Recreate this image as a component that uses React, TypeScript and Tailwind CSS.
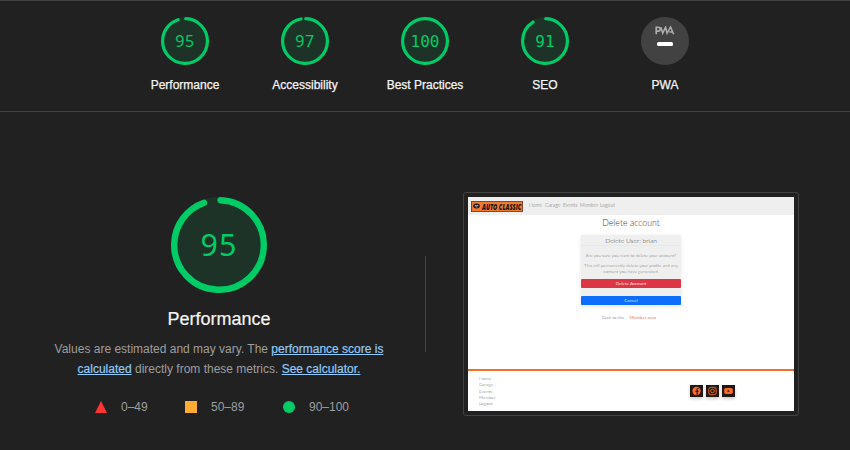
const sans = "font-['Liberation_Sans',Arial,sans-serif]";

function Arc({ score, className }: { score: number; className: string }) {
  const c = 2 * Math.PI * 56;
  const length = score === 100 ? c : (score / 100) * c - 4;
  return (
    <svg viewBox="0 0 120 120" className={`${className} col-start-1 row-start-1`}>
      <circle cx="60" cy="60" r="56" fill="#00cc66" stroke="#00cc66" strokeWidth="8" opacity="0.1" />
      <circle
        cx="60"
        cy="60"
        r="56"
        fill="none"
        stroke="#00cc66"
        strokeWidth="8"
        strokeLinecap="round"
        strokeDasharray={`${length} ${c}`}
        transform="rotate(-87.95 60 60)"
      />
    </svg>
  );
}

const categories = [
  { label: "Performance", score: 95, font: "font-['Noto_Sans',sans-serif] text-[16px] tracking-[0.5px]" },
  { label: "Accessibility", score: 97, font: "font-['Noto_Sans',sans-serif] text-[16px] tracking-[0.5px]" },
  { label: "Best Practices", score: 100, font: "pt-[2px] font-['DejaVu_Sans_Mono',monospace] text-[16px]" },
  { label: "SEO", score: 91, font: "pt-[2px] font-['DejaVu_Sans_Mono',monospace] text-[16px]" },
];

function Gauge({ label, score, font }: { label: string; score: number; font: string }) {
  return (
    <div className="flex w-[120px] flex-col items-center">
      <div className="grid place-items-center">
        <Arc score={score} className="size-12" />
        <span className={`col-start-1 row-start-1 leading-none text-[#00cc66] ${font}`}>{score}</span>
      </div>
      <span className="mt-[10px] text-xs leading-5 text-[#f5f5f5] [-webkit-text-stroke:0.25px_#f5f5f5]">{label}</span>
    </div>
  );
}

function Pwa() {
  return (
    <div className="flex w-[120px] flex-col items-center">
      <div className="flex size-12 flex-col items-center rounded-full bg-[#424242] pt-[9px]">
        <svg viewBox="0 0 20 9" className="h-[9px] w-5" fill="none" stroke="#b0b0b0">
          <path d="M1.2 8.2V1.2h2a1.8 1.8 0 0 1 0 3.9H1.2" strokeWidth="1.6" />
          <path d="M6 1.2l1.7 6 2.9-6 1.5 6L15.6 1l3 7.2M14.4 6h3" strokeWidth="1.5" />
        </svg>
        <div className="mt-[7px] h-[4px] w-4 rounded-[1.5px] bg-white" />
      </div>
      <span className="mt-[10px] text-xs leading-5 text-[#f5f5f5] [-webkit-text-stroke:0.25px_#f5f5f5]">PWA</span>
    </div>
  );
}

function SitePreview() {
  return (
    <div className="flex h-[214px] w-[326px] flex-col overflow-hidden bg-white font-['Lato',sans-serif] font-light text-[#666]">
      <div className="flex h-[18px] shrink-0 items-center bg-[#efefef] pl-[3px] text-[5px] text-[#666]">
        <div className="flex h-[11px] w-[52px] items-center gap-[1.5px] border border-[#7b4a35] bg-[#f07a30] pl-px">
          <svg viewBox="0 0 8 6" className="h-[6px] w-[7px] shrink-0">
            <ellipse cx="4" cy="3" rx="3.8" ry="2.8" fill="#251b17" />
            <path d="M2 2.5h4M3 4h2" stroke="#eee" strokeWidth=".8" />
          </svg>
          <span className="w-[40px] font-['Open_Sans',sans-serif] text-[9px] leading-none font-extrabold tracking-normal whitespace-nowrap text-[#1c1714] italic">
            <span className="inline-block origin-left scale-x-[.64]">AUTO CLASSIC</span>
          </span>
        </div>
        <span className="ml-[6px] w-4">Home</span>
        <span className="w-[18px]">Garage</span>
        <span className="w-[17px]">Events</span>
        <span className="w-5">Member</span>
        <span>Logout</span>
      </div>
      <h2 className="mt-[2px] h-[12px] text-center text-[8.7px] leading-3 tracking-[0.05px] text-[#3c3c3c]">Delete account</h2>
      <div className="mt-[6px] ml-[113px] flex h-[71px] w-[100px] flex-col rounded-[1px] bg-[#efefef] text-center text-[4.5px] leading-[6px] text-[#777] shadow-[0_1px_4px_#00000018]">
        <div className="h-[11px] border-b border-[#e8e8e8] pb-px text-[6.6px] leading-[10px] text-[#444]">Delete User: brian</div>
        <p className="mt-[6.5px] whitespace-nowrap">Are you sure you want to delete your account?</p>
        <p className="mt-[4px] whitespace-nowrap">
          This will permanently delete your profile and any
          <br />
          content you have generated.
        </p>
        <div className="mt-[4.5px] h-[9px] shrink-0 rounded-[1px] bg-[#dc3545] text-[4.5px] leading-[9px] font-normal text-[#ffe0e3]">Delete Account</div>
        <div className="mt-[8px] h-[9px] shrink-0 rounded-[1px] bg-[#0d6efd] text-[4.5px] leading-[9px] font-normal text-[#cfe2ff]">Cancel</div>
      </div>
      <div className="mt-[8px] flex justify-center gap-[5px] pr-[4px] text-[4.6px] leading-[6px]">
        <span>Back to the</span>
        <span className="font-normal text-[#ee7650]">Member area</span>
      </div>
      <div className="mt-auto h-[42px] shrink-0 border-t-2 border-[#f07030] pr-[59px] pl-[11px]">
        <div className="flex justify-between">
          <div className="mt-[4px] flex flex-col text-[4.6px] leading-[6.3px]">
            <span>Home</span>
            <span>Garage</span>
            <span>Events</span>
            <span>Member</span>
            <span>Logout</span>
          </div>
          <div className="mt-[14px] flex gap-[3px]">
            <svg viewBox="0 0 13 12" className="h-3 w-[13px] bg-[#211916] shadow-[0_2px_3px_#0003]">
              <circle cx="6.5" cy="6" r="4.2" fill="#fa6b25" />
              <path d="M7.1 10.5V6.2h1.5M7.1 6.2H5.3M7.1 6.5V4.4q0-1.1 1.5-.9" fill="none" stroke="#211916" strokeWidth="1.1" />
            </svg>
            <svg viewBox="0 0 13 12" className="h-3 w-[13px] bg-[#211916] shadow-[0_2px_3px_#0003]" fill="none" stroke="#e96528">
              <rect x="2.8" y="2.3" width="7.4" height="7.4" rx="2" />
              <circle cx="6.5" cy="6" r="1.8" />
              <circle cx="8.7" cy="3.8" r=".2" strokeWidth=".6" />
            </svg>
            <svg viewBox="0 0 13 12" className="h-3 w-[13px] bg-[#211916] shadow-[0_2px_3px_#0003]">
              <rect x="2.2" y="3" width="8.6" height="6" rx="1.7" fill="#fa6b25" />
              <path d="M5.6 4.7v2.6L7.9 6z" fill="#211916" />
            </svg>
          </div>
        </div>
      </div>
    </div>
  );
}

const link = "text-[#90caf9] underline [-webkit-text-stroke:0.2px_#90caf9]";

export default function App() {
  return (
    <div className={`h-[450px] w-[850px] overflow-hidden bg-[#212121] ${sans}`}>
      <header className="flex h-[112px] justify-center border-y border-[#424242] pt-4">
        {categories.map((c) => (
          <Gauge key={c.label} {...c} />
        ))}
        <Pwa />
      </header>
      <main className="flex pt-[80px] pl-[44px]">
        <section className="flex w-[350px] flex-col items-center pt-[5px]">
          <div className="grid place-items-center">
            <Arc score={95} className="size-24" />
            <span className="col-start-1 row-start-1 pb-[2px] font-['Noto_Sans',sans-serif] text-[30.5px] leading-none tracking-[1px] text-[#00cc66]">95</span>
          </div>
          <h1 className="mt-[12px] text-[18px] leading-7 text-[#f5f5f5] [-webkit-text-stroke:0.2px_#f5f5f5]">Performance</h1>
          <p className="mt-[6px] text-center text-xs leading-5 whitespace-nowrap text-[#9e9e9e]">
            Values are estimated and may vary. The <a className={link}>performance score is</a>
            <br />
            <a className={link}>calculated</a> directly from these metrics. <a className={link}>See calculator.</a>
          </p>
          <div className="mt-[18px] flex w-full items-center pl-[51px] text-xs leading-5 text-[#9e9e9e]">
            <svg viewBox="0 0 12 12" className="mr-[14px] size-3">
              <path d="M6 0l6 12H0z" fill="#ff3333" />
            </svg>
            <span className="w-16">0–49</span>
            <span className="mr-[14px] size-3 bg-[#ffaa33]" />
            <span className="w-[72px]">50–89</span>
            <span className="mr-[14px] size-3 rounded-full bg-[#00cc66]" />
            <span>90–100</span>
          </div>
        </section>
        <div className="mt-[64px] ml-[31px] h-24 w-px bg-[#424242]" />
        <div className="ml-[37px] h-[224px] w-[336px] rounded-[3px] border border-[#424242] p-1">
          <SitePreview />
        </div>
      </main>
    </div>
  );
}
